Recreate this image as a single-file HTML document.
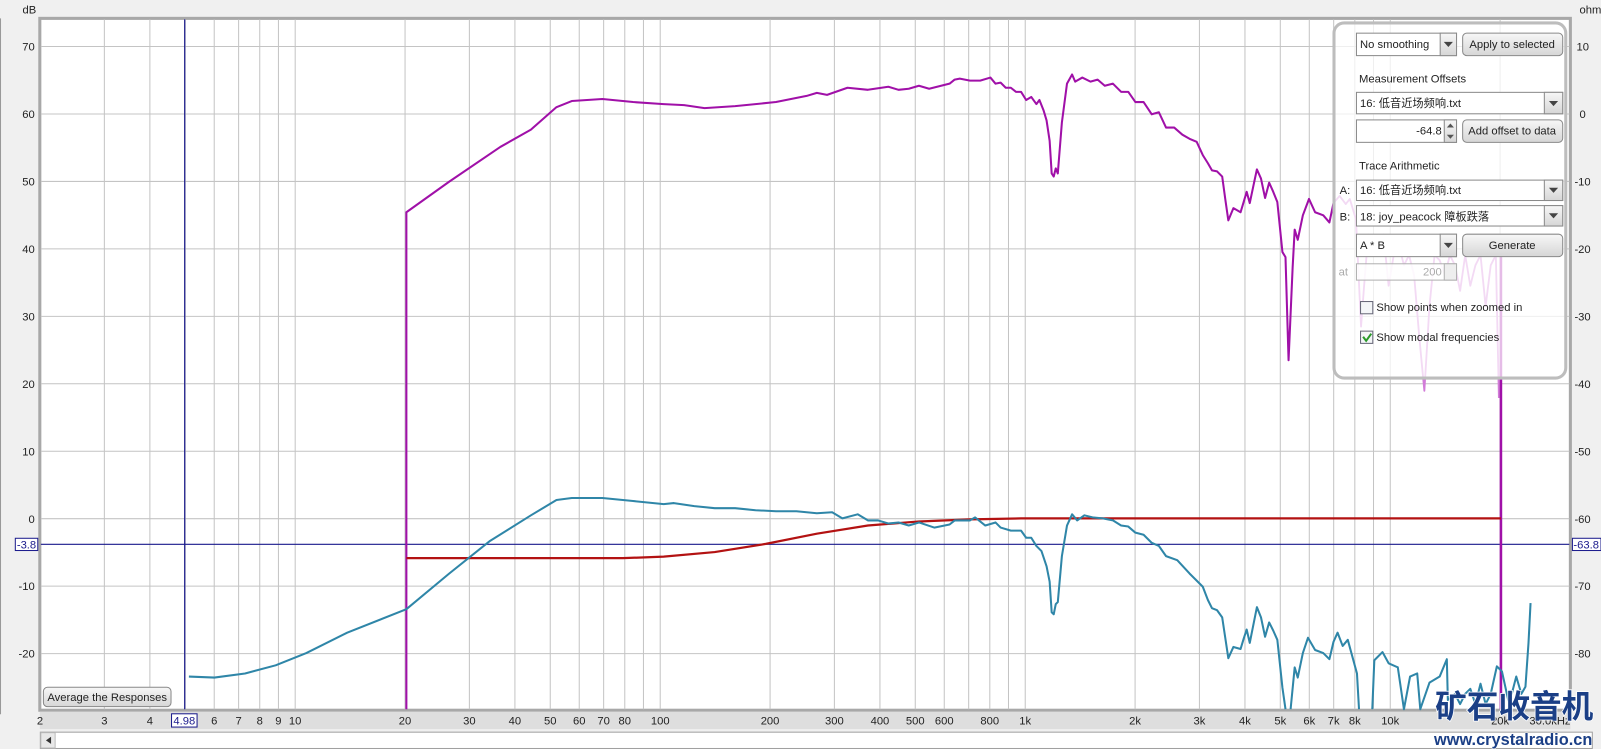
<!DOCTYPE html>
<html><head><meta charset="utf-8"><style>
html,body{margin:0;padding:0;background:#f0f0f0;overflow:hidden}
svg{display:block}
text{font-family:"Liberation Sans","Noto Sans CJK SC",sans-serif;font-size:11px;fill:#222}
</style></head><body>
<svg width="1601" height="749" viewBox="0 0 1568 734" preserveAspectRatio="none" xmlns="http://www.w3.org/2000/svg">
<defs>
<linearGradient id="btn" x1="0" y1="0" x2="0" y2="1"><stop offset="0" stop-color="#f7f7f7"/><stop offset="1" stop-color="#d6d6d6"/></linearGradient>
</defs>
<rect x="0" y="0" width="1568" height="734" fill="#f0f0f0"/>
<line x1="0.5" y1="18" x2="0.5" y2="700" stroke="#999"/>
<rect x="39" y="18" width="1499" height="678" fill="#fff" stroke="#a8a8a8" stroke-width="3"/>
<g stroke="#c4c4c4" stroke-width="1">
<line x1="102.2" y1="19" x2="102.2" y2="695"/><line x1="146.8" y1="19" x2="146.8" y2="695"/><line x1="181.4" y1="19" x2="181.4" y2="695"/><line x1="209.8" y1="19" x2="209.8" y2="695"/><line x1="233.7" y1="19" x2="233.7" y2="695"/><line x1="254.4" y1="19" x2="254.4" y2="695"/><line x1="272.7" y1="19" x2="272.7" y2="695"/><line x1="289.1" y1="19" x2="289.1" y2="695"/>
<line x1="396.7" y1="19" x2="396.7" y2="695"/><line x1="459.7" y1="19" x2="459.7" y2="695"/><line x1="504.3" y1="19" x2="504.3" y2="695"/><line x1="538.9" y1="19" x2="538.9" y2="695"/><line x1="567.3" y1="19" x2="567.3" y2="695"/><line x1="591.2" y1="19" x2="591.2" y2="695"/><line x1="611.9" y1="19" x2="611.9" y2="695"/><line x1="630.2" y1="19" x2="630.2" y2="695"/><line x1="646.6" y1="19" x2="646.6" y2="695"/>
<line x1="754.2" y1="19" x2="754.2" y2="695"/><line x1="817.2" y1="19" x2="817.2" y2="695"/><line x1="861.8" y1="19" x2="861.8" y2="695"/><line x1="896.4" y1="19" x2="896.4" y2="695"/><line x1="924.8" y1="19" x2="924.8" y2="695"/><line x1="948.7" y1="19" x2="948.7" y2="695"/><line x1="969.4" y1="19" x2="969.4" y2="695"/><line x1="987.7" y1="19" x2="987.7" y2="695"/><line x1="1004.1" y1="19" x2="1004.1" y2="695"/>
<line x1="1111.7" y1="19" x2="1111.7" y2="695"/><line x1="1174.7" y1="19" x2="1174.7" y2="695"/><line x1="1219.3" y1="19" x2="1219.3" y2="695"/><line x1="1253.9" y1="19" x2="1253.9" y2="695"/><line x1="1282.3" y1="19" x2="1282.3" y2="695"/><line x1="1306.2" y1="19" x2="1306.2" y2="695"/><line x1="1326.9" y1="19" x2="1326.9" y2="695"/><line x1="1345.2" y1="19" x2="1345.2" y2="695"/><line x1="1361.6" y1="19" x2="1361.6" y2="695"/><line x1="1469.2" y1="19" x2="1469.2" y2="695"/>
<line x1="40" y1="45.6" x2="1537" y2="45.6"/><line x1="40" y1="111.7" x2="1537" y2="111.7"/><line x1="40" y1="177.8" x2="1537" y2="177.8"/><line x1="40" y1="243.9" x2="1537" y2="243.9"/><line x1="40" y1="310" x2="1537" y2="310"/><line x1="40" y1="376.1" x2="1537" y2="376.1"/><line x1="40" y1="442.2" x2="1537" y2="442.2"/><line x1="40" y1="508.3" x2="1537" y2="508.3"/><line x1="40" y1="574.4" x2="1537" y2="574.4"/><line x1="40" y1="640.5" x2="1537" y2="640.5"/>
</g>
<line x1="40" y1="533.4" x2="1537" y2="533.4" stroke="#1a1a8c" stroke-width="1.2"/>
<line x1="180.9" y1="19" x2="180.9" y2="695" stroke="#1a1a8c" stroke-width="1.2"/>
<!-- magenta -->
<polyline fill="none" stroke="#a010a8" stroke-width="2" stroke-linejoin="round" points="398,695 398,208 440,178 490,144 520,127 545,105 560,99 590,97 620,100 650,102 670,103 690,106 720,104 760,100 790,94 800,91 810,93 830,86 850,88 870,85 880,88 890,87 900,84 910,87 930,82 935,78 940,77 950,79 960,79 970,76 975,82 980,81 985,86 990,86 995,90 1000,90 1005,98 1010,95 1015,102 1018,98 1022,108 1025,118 1028,138 1030,170 1032,173 1034,165 1036,170 1040,120 1045,82 1050,73 1053,80 1060,76 1068,80 1075,78 1082,84 1090,82 1098,90 1105,90 1112,100 1120,100 1128,112 1135,110 1142,125 1150,125 1158,132 1165,136 1172,139 1178,152 1183,160 1187,167 1192,168 1197,173 1200,195 1203,216 1208,204 1215,208 1218,198 1221,188 1224,199 1228,180 1231,166 1235,175 1239,194 1243,179 1247,188 1251,198 1256,247 1259,252 1262,353 1266,262 1268,225 1271,235 1276,211 1282,195 1288,208 1296,211 1302,218 1306,199"/>
<polyline fill="none" stroke="#d27cd8" stroke-width="1.8" stroke-linejoin="round" points="1306,199 1312,192 1318,200 1322,195 1328,215 1333,320 1336,280 1340,230 1345,240 1350,250 1355,230 1360,280 1365,250 1370,240 1375,260 1380,250 1385,270 1390,330 1395,383 1400,300 1405,250 1410,255 1415,270 1420,250 1425,260 1430,285 1435,250 1440,280 1445,260 1450,250 1455,300 1460,260 1465,250 1468,390"/>
<line x1="1470" y1="230" x2="1470" y2="695" stroke="#a010a8" stroke-width="2.5"/>
<!-- red -->
<polyline fill="none" stroke="#b31212" stroke-width="2.2" points="398,547 500,547 610,547 650,545.5 700,541 750,533 800,523 850,515 900,511 950,509 1000,508 1470,508"/>
<!-- blue -->
<polyline fill="none" stroke="#2f86a8" stroke-width="2" stroke-linejoin="round" points="185,663 210,664 240,660 270,652 300,640 340,620 398,597 440,562 480,530 520,505 545,490 560,488 590,488 620,491 650,494 660,493 680,496 700,498 720,498 740,500 760,501 780,501 800,503 815,502 825,508 840,504 850,510 860,510 870,513 880,512 890,515 900,512 915,517 930,514 935,510 950,510 955,507 965,515 975,512 980,517 990,520 1000,520 1005,527 1010,527 1015,535 1020,540 1025,555 1028,570 1030,600 1032,602 1034,592 1036,590 1040,545 1045,515 1050,504 1055,510 1062,505 1070,507 1080,508 1090,510 1098,515 1105,516 1112,522 1120,524 1128,532 1135,535 1142,545 1153,549 1165,562 1178,575 1183,588 1187,596 1192,598 1197,605 1200,625 1203,645 1208,634 1215,636 1218,626 1221,617 1224,630 1228,610 1231,595 1235,605 1239,624 1243,610 1247,618 1251,627 1256,674 1259,695"/>
<polyline fill="none" stroke="#2f86a8" stroke-width="2" stroke-linejoin="round" points="1264,695 1268,654 1271,664 1276,640 1281,625 1288,637 1296,640 1302,646 1306,629 1310,620 1315,633 1320,627 1329,660 1331,695"/>
<polyline fill="none" stroke="#2f86a8" stroke-width="2" stroke-linejoin="round" points="1344,695 1346,647 1354,639 1360,650 1369,654 1375,695 1381,663 1388,660 1391,695 1400,669 1410,663 1417,646 1418,686 1425,680 1430,690 1435,680 1440,675 1445,690 1450,670 1455,690 1460,680 1466,653 1471,658 1478,690 1485,663 1490,680 1494,673 1497,630 1499,591"/>
<!-- left axis -->
<text x="22" y="13">dB</text>
<g text-anchor="end">
<text x="34" y="49.6">70</text><text x="34" y="115.7">60</text><text x="34" y="181.8">50</text><text x="34" y="247.9">40</text><text x="34" y="314">30</text><text x="34" y="380.1">20</text><text x="34" y="446.2">10</text><text x="34" y="512.3">0</text><text x="34" y="578.4">-10</text><text x="34" y="644.5">-20</text>
</g>
<rect x="15" y="527.5" width="22" height="12" fill="#fff" stroke="#1a1a8c"/>
<text x="16.5" y="537.5" style="fill:#1a1a8c">-3.8</text>
<!-- right axis -->
<text x="1547" y="13">ohm</text>
<text x="1544" y="49.6">10</text><text x="1547" y="115.7">0</text><text x="1542" y="181.8">-10</text><text x="1542" y="247.9">-20</text><text x="1542" y="314">-30</text><text x="1542" y="380.1">-40</text><text x="1542" y="446.2">-50</text><text x="1542" y="512.3">-60</text><text x="1542" y="578.4">-70</text><text x="1542" y="644.5">-80</text>
<rect x="1540" y="527.5" width="28" height="12" fill="#fff" stroke="#1a1a8c"/>
<text x="1541" y="537.5" style="fill:#1a1a8c">-63.8</text>
<!-- bottom strip -->
<rect x="39" y="697.5" width="1499" height="17" fill="#dedede"/>
<g text-anchor="middle">
<text x="39.2" y="710">2</text><text x="102.2" y="710">3</text><text x="146.8" y="710">4</text><text x="209.8" y="710">6</text><text x="233.7" y="710">7</text><text x="254.4" y="710">8</text><text x="272.7" y="710">9</text><text x="289.1" y="710">10</text>
<text x="396.7" y="710">20</text><text x="459.7" y="710">30</text><text x="504.3" y="710">40</text><text x="538.9" y="710">50</text><text x="567.3" y="710">60</text><text x="591.2" y="710">70</text><text x="611.9" y="710">80</text><text x="646.6" y="710">100</text>
<text x="754.2" y="710">200</text><text x="817.2" y="710">300</text><text x="861.8" y="710">400</text><text x="896.4" y="710">500</text><text x="924.8" y="710">600</text><text x="969.4" y="710">800</text><text x="1004.1" y="710">1k</text>
<text x="1111.7" y="710">2k</text><text x="1174.7" y="710">3k</text><text x="1219.3" y="710">4k</text><text x="1253.9" y="710">5k</text><text x="1282.3" y="710">6k</text><text x="1306.2" y="710">7k</text><text x="1326.9" y="710">8k</text><text x="1361.6" y="710">10k</text><text x="1469.2" y="710">20k</text><text x="1518" y="710">30.0kHz</text>
</g>
<rect x="168" y="699.5" width="25" height="13" fill="#fff" stroke="#1a1a8c"/>
<text x="180.5" y="710" text-anchor="middle" style="fill:#1a1a8c">4.98</text>
<rect x="39.5" y="717.5" width="1520" height="16" fill="#fff" stroke="#a0a0a0"/>
<rect x="40" y="718" width="14" height="15" fill="#e8e8e8" stroke="#bbb"/>
<path d="M50 722 L45 725.5 L50 729 Z" fill="#333"/>
<rect x="42.5" y="673.5" width="125" height="19" rx="4" fill="url(#btn)" stroke="#888"/>
<text x="105" y="687" text-anchor="middle">Average the Responses</text>
<!-- panel -->
<rect x="1306.5" y="22.5" width="227" height="348" rx="10" fill="rgba(255,255,255,0.72)" stroke="#bdbdbd" stroke-width="3"/>
<rect x="1328.5" y="32.5" width="98" height="22" fill="#fff" stroke="#8a8a8a"/>
<rect x="1410.5" y="32.5" width="16" height="22" fill="url(#btn)" stroke="#8a8a8a"/>
<path d="M1414 41 L1423 41 L1418.5 46 Z" fill="#444"/>
<text x="1332" y="47">No  smoothing</text>
<rect x="1432.5" y="32.5" width="98" height="22" rx="4" fill="url(#btn)" stroke="#8a8a8a"/>
<text x="1481" y="47" text-anchor="middle">Apply to selected</text>
<text x="1331" y="81">Measurement Offsets</text>
<rect x="1328.5" y="90.5" width="202" height="21" fill="#fff" stroke="#8a8a8a"/>
<rect x="1512.5" y="90.5" width="18" height="21" fill="url(#btn)" stroke="#8a8a8a"/>
<path d="M1517 99 L1526 99 L1521.5 104 Z" fill="#444"/>
<text x="1332" y="105">16: 低音近场频响.txt</text>
<rect x="1328.5" y="117.5" width="98" height="22" fill="#fff" stroke="#8a8a8a"/>
<rect x="1414.5" y="117.5" width="12" height="22" fill="url(#btn)" stroke="#8a8a8a"/>
<path d="M1417 125 L1424 125 L1420.5 121 Z M1417 132 L1424 132 L1420.5 136 Z" fill="#555"/>
<text x="1412" y="132" text-anchor="end">-64.8</text>
<rect x="1432.5" y="117.5" width="98" height="22" rx="4" fill="url(#btn)" stroke="#8a8a8a"/>
<text x="1481" y="132" text-anchor="middle">Add offset to data</text>
<text x="1331" y="166">Trace Arithmetic</text>
<text x="1312" y="190">A:</text>
<rect x="1328.5" y="176.5" width="202" height="20" fill="#fff" stroke="#8a8a8a"/>
<rect x="1512.5" y="176.5" width="18" height="20" fill="url(#btn)" stroke="#8a8a8a"/>
<path d="M1517 184 L1526 184 L1521.5 189 Z" fill="#444"/>
<text x="1332" y="190">16: 低音近场频响.txt</text>
<text x="1312" y="216">B:</text>
<rect x="1328.5" y="201.5" width="202" height="20" fill="#fff" stroke="#8a8a8a"/>
<rect x="1512.5" y="201.5" width="18" height="20" fill="url(#btn)" stroke="#8a8a8a"/>
<path d="M1517 209 L1526 209 L1521.5 214 Z" fill="#444"/>
<text x="1332" y="216">18: joy_peacock 障板跌落</text>
<rect x="1328.5" y="229.5" width="98" height="22" fill="#fff" stroke="#8a8a8a"/>
<rect x="1410.5" y="229.5" width="16" height="22" fill="url(#btn)" stroke="#8a8a8a"/>
<path d="M1414 238 L1423 238 L1418.5 243 Z" fill="#444"/>
<text x="1332" y="244">A * B</text>
<rect x="1432.5" y="229.5" width="98" height="22" rx="4" fill="url(#btn)" stroke="#8a8a8a"/>
<text x="1481" y="244" text-anchor="middle">Generate</text>
<text x="1311" y="270" style="fill:#aaa">at</text>
<rect x="1328.5" y="258.5" width="98" height="16" fill="rgba(255,255,255,0.8)" stroke="#b0b0b0"/>
<rect x="1414.5" y="258.5" width="12" height="16" fill="#eee" stroke="#b0b0b0"/>
<text x="1412" y="270" text-anchor="end" style="fill:#aaa">200</text>
<rect x="1332.5" y="295.5" width="12" height="12" fill="#f4f6f8" stroke="#667"/>
<text x="1348" y="305">Show points when zoomed in</text>
<rect x="1332.5" y="324.5" width="12" height="12" fill="#f4f6f8" stroke="#667"/>
<path d="M1335 330 L1338 334 L1343 327" fill="none" stroke="#2a9a2a" stroke-width="2"/>
<text x="1348" y="334">Show modal frequencies</text>
<!-- watermark -->
<text x="1483" y="703" text-anchor="middle" style="font-family:'Noto Sans CJK SC',sans-serif;font-size:31px;font-weight:bold;fill:#1b3f86;stroke:#fff;stroke-width:1.5;paint-order:stroke">矿石收音机</text>
<text x="1482" y="730" text-anchor="middle" style="font-size:16px;font-weight:bold;fill:#1b3f86;stroke:#fff;stroke-width:1;paint-order:stroke">www.crystalradio.cn</text>
</svg>
</body></html>
